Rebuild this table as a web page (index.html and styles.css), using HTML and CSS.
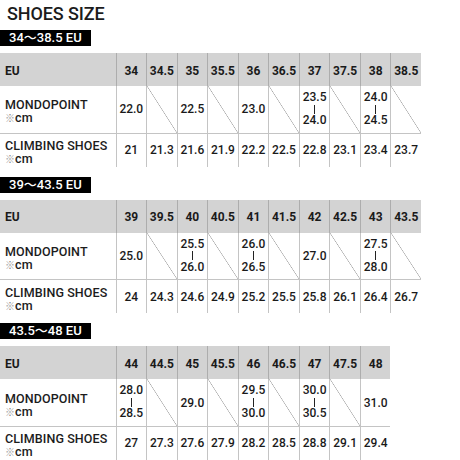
FILE: index.html
```html
<!DOCTYPE html>
<html>
<head>
<meta charset="utf-8">
<link rel="stylesheet" href="styles.css">
</head>
<body>
<h1 class="title">SHOES SIZE</h1>

<section class="sec">
  <div class="badge">34〜38.5 EU</div>
  <div class="grid g10">
    <div class="h hl">EU</div>
    <div class="h">34</div><div class="h">34.5</div><div class="h">35</div><div class="h">35.5</div><div class="h">36</div><div class="h">36.5</div><div class="h">37</div><div class="h">37.5</div><div class="h">38</div><div class="h">38.5</div>
    <div class="l"><span class="ln">MONDOPOINT</span><span class="ln"><span class="ref">※</span>cm</span></div>
    <div class="v">22.0</div><div class="v d"></div><div class="v">22.5</div><div class="v d"></div><div class="v">23.0</div><div class="v d"></div>
    <div class="v st"><span>23.5</span><i class="bar"></i><span>24.0</span></div><div class="v d"></div>
    <div class="v st"><span>24.0</span><i class="bar"></i><span>24.5</span></div><div class="v d"></div>
    <div class="l c"><span class="ln">CLIMBING SHOES</span><span class="ln"><span class="ref">※</span>cm</span></div>
    <div class="v c">21</div><div class="v c">21.3</div><div class="v c">21.6</div><div class="v c">21.9</div><div class="v c">22.2</div><div class="v c">22.5</div><div class="v c">22.8</div><div class="v c">23.1</div><div class="v c">23.4</div><div class="v c">23.7</div>
  </div>
</section>

<section class="sec">
  <div class="badge">39〜43.5 EU</div>
  <div class="grid g10">
    <div class="h hl">EU</div>
    <div class="h">39</div><div class="h">39.5</div><div class="h">40</div><div class="h">40.5</div><div class="h">41</div><div class="h">41.5</div><div class="h">42</div><div class="h">42.5</div><div class="h">43</div><div class="h">43.5</div>
    <div class="l"><span class="ln">MONDOPOINT</span><span class="ln"><span class="ref">※</span>cm</span></div>
    <div class="v">25.0</div><div class="v d"></div>
    <div class="v st"><span>25.5</span><i class="bar"></i><span>26.0</span></div><div class="v d"></div>
    <div class="v st"><span>26.0</span><i class="bar"></i><span>26.5</span></div><div class="v d"></div>
    <div class="v">27.0</div><div class="v d"></div>
    <div class="v st"><span>27.5</span><i class="bar"></i><span>28.0</span></div><div class="v d"></div>
    <div class="l c"><span class="ln">CLIMBING SHOES</span><span class="ln"><span class="ref">※</span>cm</span></div>
    <div class="v c">24</div><div class="v c">24.3</div><div class="v c">24.6</div><div class="v c">24.9</div><div class="v c">25.2</div><div class="v c">25.5</div><div class="v c">25.8</div><div class="v c">26.1</div><div class="v c">26.4</div><div class="v c">26.7</div>
  </div>
</section>

<section class="sec">
  <div class="badge">43.5〜48 EU</div>
  <div class="grid g9">
    <div class="h hl">EU</div>
    <div class="h">44</div><div class="h">44.5</div><div class="h">45</div><div class="h">45.5</div><div class="h">46</div><div class="h">46.5</div><div class="h">47</div><div class="h">47.5</div><div class="h">48</div>
    <div class="l"><span class="ln">MONDOPOINT</span><span class="ln"><span class="ref">※</span>cm</span></div>
    <div class="v st"><span>28.0</span><i class="bar"></i><span>28.5</span></div><div class="v d"></div>
    <div class="v">29.0</div><div class="v d"></div>
    <div class="v st"><span>29.5</span><i class="bar"></i><span>30.0</span></div><div class="v d"></div>
    <div class="v st"><span>30.0</span><i class="bar"></i><span>30.5</span></div><div class="v d"></div>
    <div class="v">31.0</div>
    <div class="l c"><span class="ln">CLIMBING SHOES</span><span class="ln"><span class="ref">※</span>cm</span></div>
    <div class="v c">27</div><div class="v c">27.3</div><div class="v c">27.6</div><div class="v c">27.9</div><div class="v c">28.2</div><div class="v c">28.5</div><div class="v c">28.8</div><div class="v c">29.1</div><div class="v c">29.4</div>
  </div>
</section>
</body>
</html>
```

FILE: styles.css
```css
html, body {
  margin: 0;
  padding: 0;
  background: #ffffff;
}
body {
  font-family: Roboto, "Noto Sans", "Liberation Sans", "Noto Sans CJK JP", sans-serif;
  color: #1c1c1c;
  width: 460px;
  height: 460px;
  overflow: hidden;
}
.title {
  margin: 3px 0 0 0;
  padding-left: 7px;
  font-size: 18px;
  line-height: 22px;
  height: 22px;
  font-weight: 500;
  letter-spacing: -0.1px;
}
.sec {
  display: flex;
  flex-direction: column;
  align-items: flex-start;
  margin-bottom: 10px;
}
.title + .sec {
  margin-top: 5px;
}
.badge {
  background: #000000;
  color: #ffffff;
  height: 16px;
  line-height: 16px;
  width: 91px;
  box-sizing: border-box;
  padding-left: 9px;
  font-size: 13px;
  font-weight: 500;
  white-space: nowrap;
  margin-bottom: 7px;
  overflow: hidden;
}
.grid {
  display: grid;
  grid-template-rows: 33px 46.67px 34px;
}
.g10 {
  grid-template-columns: 115.5px repeat(10, 30.55px);
}
.g9 {
  grid-template-columns: 115.5px repeat(9, 30.55px);
}
.grid > div {
  box-sizing: border-box;
}
.h {
  background: #d3d3d3;
  border-left: 1px solid #adadad;
  display: flex;
  align-items: center;
  justify-content: center;
  padding-top: 2px;
  font-size: 12px;
  font-weight: 700;
  color: #1a1a1a;
}
.h.hl {
  border-left: none;
  justify-content: flex-start;
  padding-left: 5px;
}
.l {
  display: flex;
  flex-direction: column;
  justify-content: center;
  align-items: flex-start;
  padding-left: 5px;
  padding-top: 4px;
  font-size: 12.5px;
  font-weight: 500;
  white-space: nowrap;
}
.ln {
  display: block;
  height: 13px;
  line-height: 13px;
  letter-spacing: 0.1px;
}
.ref {
  font-family: "Noto Sans CJK JP", sans-serif;
  font-size: 10px;
  line-height: 10px;
  color: #8f8f8f;
  margin-right: 0;
  vertical-align: 0;
}
.v {
  border-left: 1px solid #c4c4c4;
  display: flex;
  align-items: center;
  justify-content: center;
  font-size: 12px;
  font-weight: 500;
  color: #1a1a1a;
}
.c {
  border-top: 1px solid #c4c4c4;
}
.d {
  background: linear-gradient(to top right, transparent calc(50% - 0.6px), #a9a9a9 50%, transparent calc(50% + 0.6px));
}
.st {
  flex-direction: column;
  line-height: 11.6px;
}
.st span {
  display: block;
  height: 11.6px;
}
.bar {
  display: block;
  width: 1.4px;
  height: 9px;
  margin: 1.3px 0;
  background: #222222;
}
```
